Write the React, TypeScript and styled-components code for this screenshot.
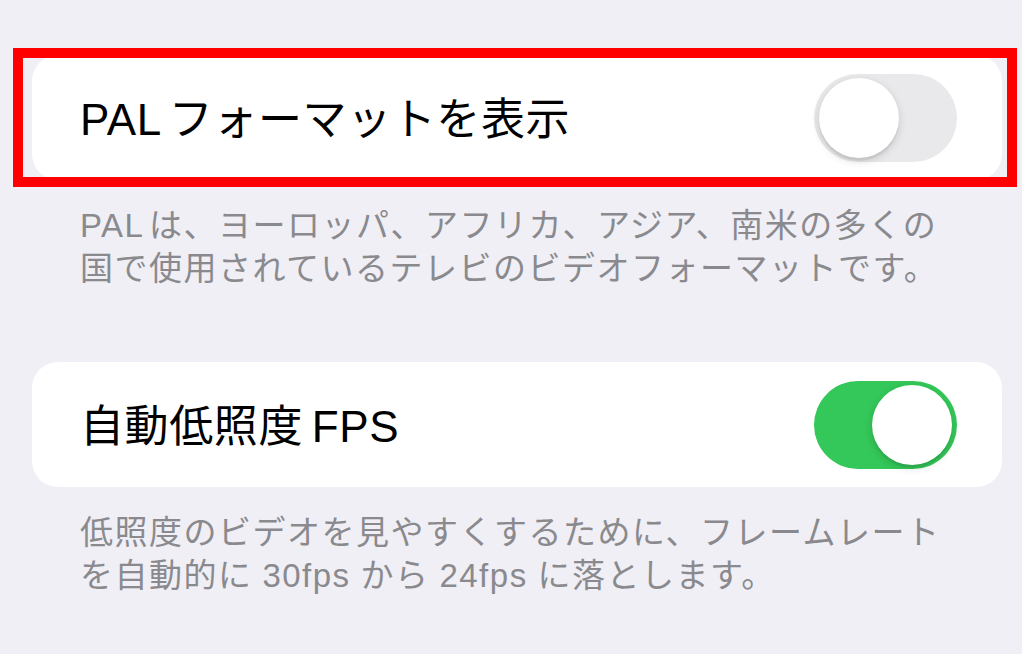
import React from 'react'
import styled, { createGlobalStyle } from 'styled-components'

const GlobalStyle = createGlobalStyle`
  html, body {
    margin: 0;
    padding: 0;
    background: #f0eff5;
  }
  body {
    font-family: 'Liberation Sans', 'Noto Sans CJK JP', sans-serif;
    -webkit-font-smoothing: antialiased;
  }
`

const Page = styled('div')`
  min-height: 654px;
  box-sizing: border-box;
  padding: 55px 0 0 32px;
  display: flex;
  flex-direction: column;
  gap: 72px;
`

const Section = styled('section')`
  width: 970px;
  display: flex;
  flex-direction: column;
`

const Card = styled('div')`
  position: relative;
  height: 125px;
  box-sizing: border-box;
  padding: 0 45px 0 48px;
  background: #ffffff;
  border-radius: 26px;
  display: flex;
  align-items: center;
  justify-content: space-between;
`

const Title = styled('div')`
  padding-top: 4px;
  font-size: 44px;
  color: #000000;
  line-height: 1;
  letter-spacing: 0.6px;
`

const Latin = styled('span')<{ $before?: boolean; $after?: boolean; $gap?: string }>`
  margin-left: ${({ $before, $gap }) => ($before ? $gap ?? '0.2em' : '0')};
  margin-right: ${({ $after, $gap }) => ($after ? $gap ?? '0.14em' : '0.16em')};
`

const Switch = styled('div')<{ $on: boolean }>`
  width: 143px;
  height: 88px;
  border-radius: 44px;
  box-sizing: border-box;
  padding: 4px 5px;
  background: ${({ $on }) => ($on ? '#34c759' : '#e9e9eb')};
  display: flex;
  justify-content: ${({ $on }) => ($on ? 'flex-end' : 'flex-start')};
  align-items: center;
`

const Knob = styled('div')`
  width: 80px;
  height: 80px;
  border-radius: 50%;
  background: #ffffff;
  box-shadow: 0 3px 8px rgba(0, 0, 0, 0.15), 0 3px 1px rgba(0, 0, 0, 0.06);
`

// red annotation frame drawn over the first row
const Highlight = styled('div')`
  position: absolute;
  left: -19px;
  top: -7px;
  right: -15px;
  bottom: -7px;
  border: 10px solid #ff0000;
  pointer-events: none;
`

const Note = styled('p')`
  margin: 0;
  padding: 24px 0 0 48px;
  font-size: 33px;
  line-height: 43px;
  letter-spacing: 1.5px;
  color: #8a8a8e;
`

const settings = [
  {
    title: (
      <>
        <Latin>PAL</Latin>フォーマットを表示
      </>
    ),
    on: false,
    highlighted: true,
    note: (
      <>
        <Latin $after>PAL</Latin>は、ヨーロッパ、アフリカ、アジア、南米の多くの
        <br />
        国で使用されているテレビのビデオフォーマットです。
      </>
    ),
  },
  {
    title: (
      <>
        自動低照度<Latin $before>FPS</Latin>
      </>
    ),
    on: true,
    highlighted: false,
    note: (
      <>
        低照度のビデオを見やすくするために、フレームレート
        <br />
        を自動的に<Latin $before $after $gap="0.3em">30fps</Latin>から
        <Latin $before $after $gap="0.3em">24fps</Latin>に落とします。
      </>
    ),
  },
]

export default function App() {
  return (
    <>
      <GlobalStyle />
      <Page>
        {settings.map((s, i) => (
          <Section key={i}>
            <Card>
              <Title>{s.title}</Title>
              <Switch $on={s.on}>
                <Knob />
              </Switch>
              {s.highlighted && <Highlight />}
            </Card>
            <Note>{s.note}</Note>
          </Section>
        ))}
      </Page>
    </>
  )
}
